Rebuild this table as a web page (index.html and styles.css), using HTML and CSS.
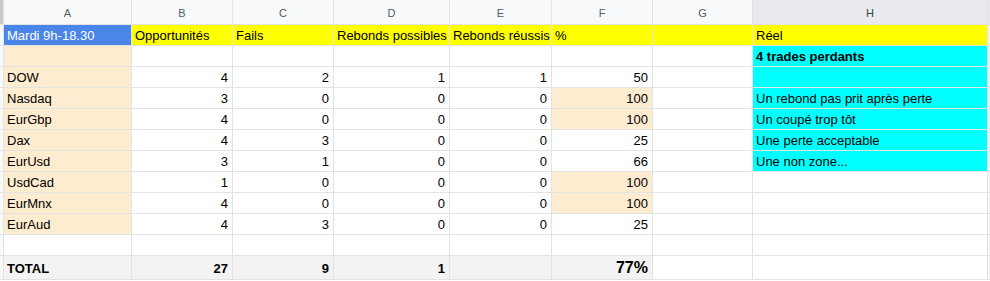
FILE: index.html
```html
<!DOCTYPE html>
<html lang="fr">
<head>
<meta charset="utf-8">
<title>Feuille</title>
<link rel="stylesheet" href="styles.css">
</head>
<body>
<div class="sheet">
  <!-- column headers -->
  <div class="rh corner"></div>
  <div class="ch">A</div><div class="ch">B</div><div class="ch">C</div><div class="ch">D</div>
  <div class="ch">E</div><div class="ch">F</div><div class="ch">G</div><div class="ch sel">H</div><div class="ch tail"></div>

  <!-- row 1 -->
  <div class="rh"></div>
  <div class="c blue">Mardi 9h-18.30</div>
  <div class="c yellow">Opportunités</div>
  <div class="c yellow">Fails</div>
  <div class="c yellow">Rebonds possibles</div>
  <div class="c yellow">Rebonds réussis</div>
  <div class="c yellow">%</div>
  <div class="c yellow"></div>
  <div class="c yellow">Réel</div>
  <div class="c tail"></div>

  <!-- row 2 -->
  <div class="rh"></div>
  <div class="c peach"></div>
  <div class="c"></div><div class="c"></div><div class="c"></div><div class="c"></div><div class="c"></div><div class="c"></div>
  <div class="c cyan bold">4 trades perdants</div>
  <div class="c tail"></div>

  <!-- DOW -->
  <div class="rh"></div>
  <div class="c peach">DOW</div>
  <div class="c num">4</div><div class="c num">2</div><div class="c num">1</div><div class="c num">1</div>
  <div class="c num">50</div><div class="c"></div>
  <div class="c cyan"></div>
  <div class="c tail"></div>

  <!-- Nasdaq -->
  <div class="rh"></div>
  <div class="c peach">Nasdaq</div>
  <div class="c num">3</div><div class="c num">0</div><div class="c num">0</div><div class="c num">0</div>
  <div class="c num peach">100</div><div class="c"></div>
  <div class="c cyan">Un rebond pas prit après perte</div>
  <div class="c tail"></div>

  <!-- EurGbp -->
  <div class="rh"></div>
  <div class="c peach">EurGbp</div>
  <div class="c num">4</div><div class="c num">0</div><div class="c num">0</div><div class="c num">0</div>
  <div class="c num peach">100</div><div class="c"></div>
  <div class="c cyan">Un coupé trop tôt</div>
  <div class="c tail"></div>

  <!-- Dax -->
  <div class="rh"></div>
  <div class="c peach">Dax</div>
  <div class="c num">4</div><div class="c num">3</div><div class="c num">0</div><div class="c num">0</div>
  <div class="c num">25</div><div class="c"></div>
  <div class="c cyan">Une perte acceptable</div>
  <div class="c tail"></div>

  <!-- EurUsd -->
  <div class="rh"></div>
  <div class="c peach">EurUsd</div>
  <div class="c num">3</div><div class="c num">1</div><div class="c num">0</div><div class="c num">0</div>
  <div class="c num">66</div><div class="c"></div>
  <div class="c cyan">Une non zone...</div>
  <div class="c tail"></div>

  <!-- UsdCad -->
  <div class="rh"></div>
  <div class="c peach">UsdCad</div>
  <div class="c num">1</div><div class="c num">0</div><div class="c num">0</div><div class="c num">0</div>
  <div class="c num peach">100</div><div class="c"></div>
  <div class="c"></div>
  <div class="c tail"></div>

  <!-- EurMnx -->
  <div class="rh"></div>
  <div class="c peach">EurMnx</div>
  <div class="c num">4</div><div class="c num">0</div><div class="c num">0</div><div class="c num">0</div>
  <div class="c num peach">100</div><div class="c"></div>
  <div class="c"></div>
  <div class="c tail"></div>

  <!-- EurAud -->
  <div class="rh"></div>
  <div class="c peach">EurAud</div>
  <div class="c num">4</div><div class="c num">3</div><div class="c num">0</div><div class="c num">0</div>
  <div class="c num">25</div><div class="c"></div>
  <div class="c"></div>
  <div class="c tail"></div>

  <!-- blank -->
  <div class="rh"></div>
  <div class="c"></div><div class="c"></div><div class="c"></div><div class="c"></div><div class="c"></div>
  <div class="c"></div><div class="c"></div><div class="c"></div>
  <div class="c tail"></div>

  <!-- total -->
  <div class="rh"></div>
  <div class="c total bold">TOTAL</div>
  <div class="c total num bold">27</div>
  <div class="c total num bold">9</div>
  <div class="c total num bold">1</div>
  <div class="c total"></div>
  <div class="c total num bold big">77%</div>
  <div class="c"></div>
  <div class="c"></div>
  <div class="c tail"></div>
</div>
</body>
</html>
```

FILE: styles.css
```css
html, body {
  margin: 0;
  padding: 0;
  background: #ffffff;
  overflow: hidden;
}

.sheet {
  display: grid;
  grid-template-columns: 3px 127px 100px 100px 115px 101px 100px 99px 234px 2px;
  grid-template-rows: 24px repeat(11, 20px) 23px;
  gap: 1px;
  background: #e2e3e3;
  border-bottom: 1px solid #e2e3e3;
  width: 990px;
  font-family: "Liberation Sans", Arial, sans-serif;
  font-size: 13px;
  color: #000;
}

.rh {
  background: #f8f9fa;
}

.rh.corner {
  background: #c8c9cb;
}

.ch {
  background: #f8f9fa;
  color: #575a5e;
  font-size: 11px;
  display: flex;
  align-items: center;
  justify-content: center;
  padding-top: 1px;
  box-sizing: border-box;
}

.ch.sel {
  background: #e8eaed;
  color: #3c4043;
}

.ch.tail {
  background: #e8eaed;
}

.c {
  background: #ffffff;
  display: flex;
  align-items: flex-end;
  padding: 0 3px 2px 3px;
  line-height: 15px;
  white-space: nowrap;
  overflow: hidden;
  box-sizing: border-box;
}

.c.tail {
  padding: 0;
  background: #f4f5f6;
}

.num {
  justify-content: flex-end;
  padding-right: 4px;
}

.blue {
  background: #4a86e8;
  color: #ffffff;
}

.yellow {
  background: #ffff00;
}

.cyan {
  background: #00ffff;
}

.peach {
  background: #fdeccf;
}

.total {
  background: #f3f3f3;
  padding-bottom: 3px;
}

.bold {
  font-weight: bold;
}

.big {
  font-size: 16px;
  padding-bottom: 4px;
}
```
